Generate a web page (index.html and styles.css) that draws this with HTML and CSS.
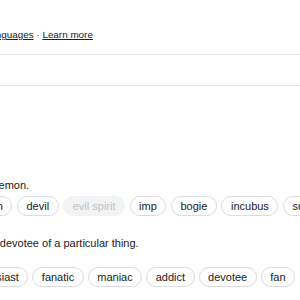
FILE: index.html
```html
<!DOCTYPE html>
<html lang="en">
<head>
<meta charset="utf-8">
<title>fiend – definition</title>
<link rel="stylesheet" href="styles.css">
</head>
<body>
<div class="source">Definitions from <a class="link" href="#">Oxford Languages</a> · <a class="link" href="#">Learn more</a></div>
<hr class="rule rule-top">
<hr class="rule rule-bottom">
<div class="senses">
  <div class="sense sense-1">
    <div class="def">an evil spirit or demon.</div>
    <div class="similar">
      <span class="label">Similar:</span>
      <span class="chip">demon</span>
      <span class="chip">devil</span>
      <span class="chip chip-muted">evil spirit</span>
      <span class="chip">imp</span>
      <span class="chip">bogie</span>
      <span class="chip">incubus</span>
      <span class="chip">succubus</span>
    </div>
  </div>
  <div class="sense sense-2">
    <div class="def">an enthusiast or devotee of a particular thing.</div>
    <div class="similar">
      <span class="label">Similar:</span>
      <span class="chip">enthusiast</span>
      <span class="chip">fanatic</span>
      <span class="chip">maniac</span>
      <span class="chip">addict</span>
      <span class="chip">devotee</span>
      <span class="chip">fan</span>
    </div>
  </div>
</div>
</body>
</html>
```
FILE: styles.css
```css
html, body {
  margin: 0;
  padding: 0;
  background: #ffffff;
  overflow: hidden;
}
body {
  width: 300px;
  height: 300px;
  font-family: "Liberation Sans", Arial, sans-serif;
  color: #202124;
}
.source {
  white-space: nowrap;
  font-size: 9.9px;
  line-height: 12px;
  color: #3c4043;
  margin: 29px 0 0 -119px;
}
.link {
  color: #202124;
  text-decoration: underline;
}
.rule {
  border: 0;
  height: 1px;
  margin: 0;
  background: #e6e6e6;
}
.rule-top {
  margin-top: 13px;
}
.rule-bottom {
  margin-top: 30px;
}
.senses {
  margin: 91px 0 0 -81.5px;
  white-space: nowrap;
  font-size: 11px;
  line-height: 16px;
}
.def {
  color: #202124;
}
.similar {
  display: flex;
  gap: 4px;
  align-items: center;
  margin-top: 3px;
}
.sense-1 .similar {
  gap: 4.6px;
}
.label {
  color: #70757a;
}
.chip {
  flex: none;
  height: 18px;
  line-height: 18px;
  padding: 0 8.5px;
  border: 1px solid #dadce0;
  border-radius: 10px;
  color: #202124;
}
.chip-muted {
  background: #f1f3f4;
  border-color: #f1f3f4;
  color: #bdc1c6;
}
.sense-2 {
  margin-top: 19px;
}
.sense-2 .similar {
  margin-top: 16px;
}
```
